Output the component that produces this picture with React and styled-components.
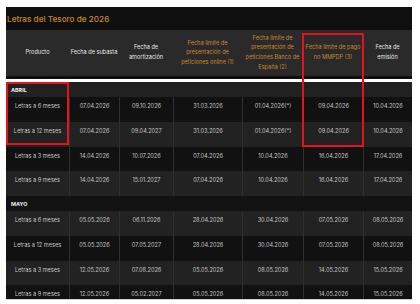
import styled, { createGlobalStyle } from "styled-components";

const GlobalStyle = createGlobalStyle`
  html, body {
    margin: 0;
    padding: 0;
    background: #ffffff;
  }
  body {
    font-family: Inter, "Noto Sans", sans-serif;
  }
`;

const COLS = "63px 50px 54px 69px 61px 60px 49px";

const Page = styled.div`
  width: 420px;
  height: 304px;
  overflow: hidden;
  padding: 7px 8px 0 6px;
  box-sizing: border-box;
`;

const Frame = styled.div`
  position: relative;
  width: 406px;
`;

const Head = styled.div`
  background: #0f0f0f;
  padding-bottom: 3px;
`;

const Title = styled.h2`
  margin: 0;
  height: 23px;
  display: flex;
  align-items: center;
  padding-left: 1px;
  font-size: 8.2px;
  font-weight: 500;
  color: #c9862c;
`;

const HeaderRow = styled.div`
  display: grid;
  grid-template-columns: ${COLS};
  height: 46px;
  background: #2a2a2a;
`;

const HeaderCell = styled.div`
  display: flex;
  align-items: center;
  justify-content: center;
  text-align: center;
  font-size: 5.6px;
  line-height: 9.6px;
  white-space: nowrap;
  color: ${(p) => (p.$accent ? "#c9862c" : "#e6e6e6")};
`;

const Gap = styled.div`
  height: 3px;
  background: #ffffff;
`;

const Body = styled.div`
  background: #141414;
  border-bottom: 1px solid #cfcfcf;
  height: 217px;
  overflow: hidden;
`;

const Section = styled.div`
  height: 15px;
  display: flex;
  align-items: center;
  padding-left: 5px;
  font-size: 5.4px;
  font-weight: 700;
  color: #f0f0f0;
  background: ${(p) => (p.$dark ? "#121212" : "#212121")};
`;

const Row = styled.div`
  display: grid;
  grid-template-columns: ${COLS};
  height: 24.75px;
  background: ${(p) => (p.$dark ? "#111111" : "#222222")};
`;

const Cell = styled.div`
  padding-top: 5px;
  text-align: center;
  font-size: 5.6px;
  line-height: 8px;
  color: #c4c4c4;
  white-space: nowrap;
  border-left: 1px solid #2f2f2f;
  &:first-child {
    border-left: none;
  }
`;

const Mark = styled.div`
  position: absolute;
  left: ${(p) => p.$x}px;
  top: ${(p) => p.$y}px;
  width: ${(p) => p.$w}px;
  height: ${(p) => p.$h}px;
  border: 2px solid #e3141b;
  box-sizing: border-box;
  pointer-events: none;
`;

const headers = [
  { lines: ["Producto"] },
  { lines: ["Fecha de subasta"] },
  { lines: ["Fecha de", "amortización"] },
  { lines: ["Fecha límite de", "presentación de", "peticiones online (1)"], accent: true },
  { lines: ["Fecha límite de", "presentación de", "peticiones Banco de", "España (2)"], accent: true },
  { lines: ["Fecha límite de pago", "no MMPDP (3)"], accent: true },
  { lines: ["Fecha de", "emisión"] },
];

const months = [
  {
    name: "ABRIL",
    rows: [
      ["Letras a 6 meses", "07.04.2026", "09.10.2026", "31.03.2026", "01.04.2026(*)", "09.04.2026", "10.04.2026"],
      ["Letras a 12 meses", "07.04.2026", "09.04.2027", "31.03.2026", "01.04.2026(*)", "09.04.2026", "10.04.2026"],
      ["Letras a 3 meses", "14.04.2026", "10.07.2026", "07.04.2026", "10.04.2026", "16.04.2026", "17.04.2026"],
      ["Letras a 9 meses", "14.04.2026", "15.01.2027", "07.04.2026", "10.04.2026", "16.04.2026", "17.04.2026"],
    ],
  },
  {
    name: "MAYO",
    rows: [
      ["Letras a 6 meses", "05.05.2026", "06.11.2026", "28.04.2026", "30.04.2026", "07.05.2026", "08.05.2026"],
      ["Letras a 12 meses", "05.05.2026", "07.05.2027", "28.04.2026", "30.04.2026", "07.05.2026", "08.05.2026"],
      ["Letras a 3 meses", "12.05.2026", "07.08.2026", "05.05.2026", "08.05.2026", "14.05.2026", "15.05.2026"],
      ["Letras a 9 meses", "12.05.2026", "05.02.2027", "05.05.2026", "08.05.2026", "14.05.2026", "15.05.2026"],
    ],
  },
];

const App = () => {
  let index = 0;
  return (
    <Page>
      <GlobalStyle />
      <Frame>
        <Head>
          <Title>Letras del Tesoro de 2026</Title>
          <HeaderRow>
            {headers.map((h, i) => (
              <HeaderCell key={i} $accent={h.accent}>
                <span>
                  {h.lines.map((l, j) => (
                    <span key={j}>
                      {l}
                      {j < h.lines.length - 1 && <br />}
                    </span>
                  ))}
                </span>
              </HeaderCell>
            ))}
          </HeaderRow>
        </Head>
        <Gap />
        <Body>
          {months.map((m) => {
            index += 1;
            const sectionDark = index % 2 === 0;
            return (
              <div key={m.name}>
                <Section $dark={sectionDark}>{m.name}</Section>
                {m.rows.map((r, i) => {
                  index += 1;
                  return (
                    <Row key={i} $dark={index % 2 === 0}>
                      {r.map((c, j) => (
                        <Cell key={j}>{c}</Cell>
                      ))}
                    </Row>
                  );
                })}
              </div>
            );
          })}
        </Body>
        <Mark $x={0} $y={75} $w={63} $h={63} />
        <Mark $x={296} $y={26} $w={62} $h={114} />
      </Frame>
    </Page>
  );
};

export default App;
